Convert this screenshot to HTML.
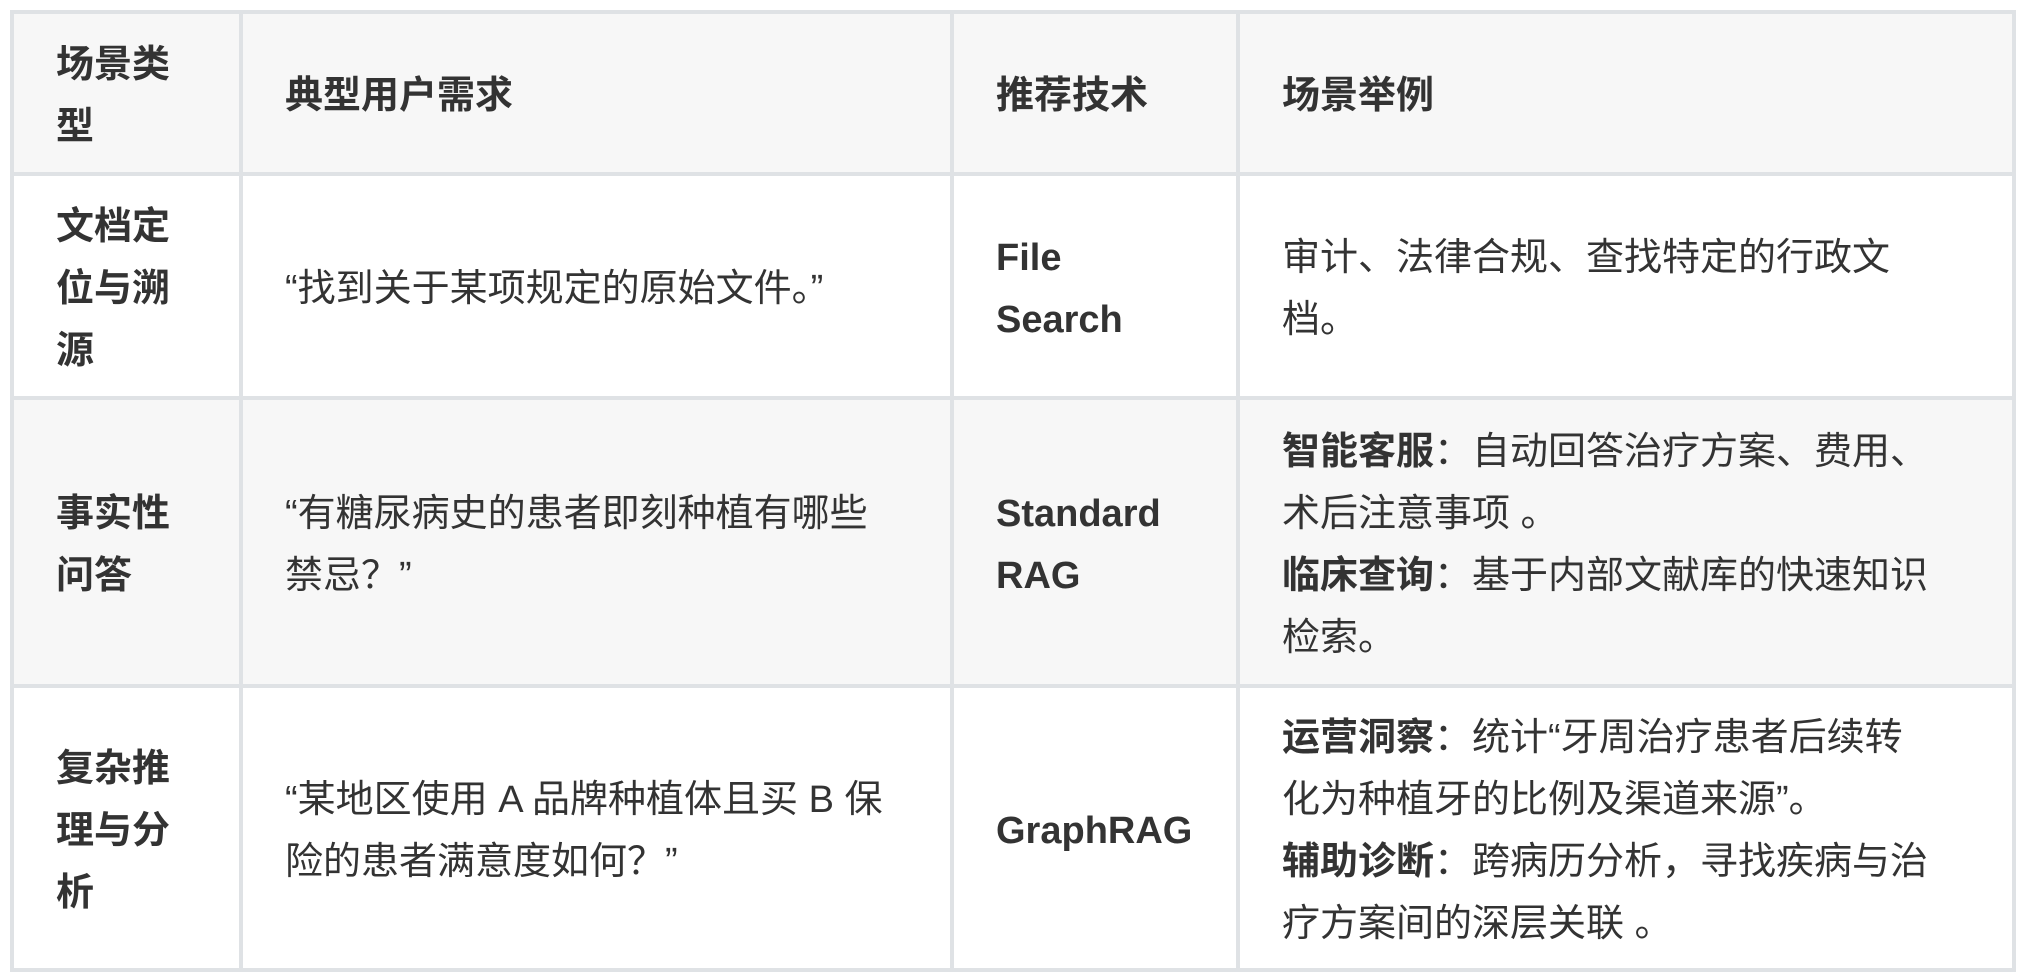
<!DOCTYPE html>
<html><head><meta charset="utf-8">
<style>
html,body{margin:0;padding:0;background:#fff;width:2022px;height:980px;overflow:hidden}
table{position:absolute;left:10px;top:10px;border-collapse:collapse;table-layout:fixed;width:2002px;
font-family:"Liberation Sans","Noto Sans CJK SC",sans-serif;font-size:38px;line-height:62px;color:#333}
td,th{border:4px solid #dfe2e5;padding:6px 40px 0 42px;vertical-align:middle;text-align:left;word-break:normal}
th{font-weight:bold;background:#f7f7f7}
tr.e td{background:#f7f7f7}
td.b{font-weight:bold}
td.w{padding-right:70px}
td.q{padding-right:60px}
b{font-weight:bold}
</style></head><body>
<table>
<colgroup><col style="width:229px"><col style="width:711px"><col style="width:286px"><col style="width:776px"></colgroup>
<tr style="height:162px"><th>场景类型</th><th>典型用户需求</th><th>推荐技术</th><th>场景举例</th></tr>
<tr style="height:224px"><td class="b">文档定位与溯源</td><td class="q">“找到关于某项规定的原始文件。”</td><td class="b">File Search</td><td class="w">审计、法律合规、查找特定的行政文档。</td></tr>
<tr class="e" style="height:288px"><td class="b">事实性问答</td><td class="q">“有糖尿病史的患者即刻种植有哪些禁忌？”</td><td class="b">Standard RAG</td><td class="w"><b>智能客服</b>：自动回答治疗方案、费用、术后注意事项 。<br><b>临床查询</b>：基于内部文献库的快速知识检索。</td></tr>
<tr style="height:284px"><td class="b">复杂推理与分析</td><td class="q">“某地区使用 A 品牌种植体且买 B 保险的患者满意度如何？”</td><td class="b">GraphRAG</td><td class="w"><b>运营洞察</b>：统计“牙周治疗患者后续转<br>化为种植牙的比例及渠道来源”。<br><b>辅助诊断</b>：跨病历分析，寻找疾病与治疗方案间的深层关联 。</td></tr>
</table>
</body></html>
